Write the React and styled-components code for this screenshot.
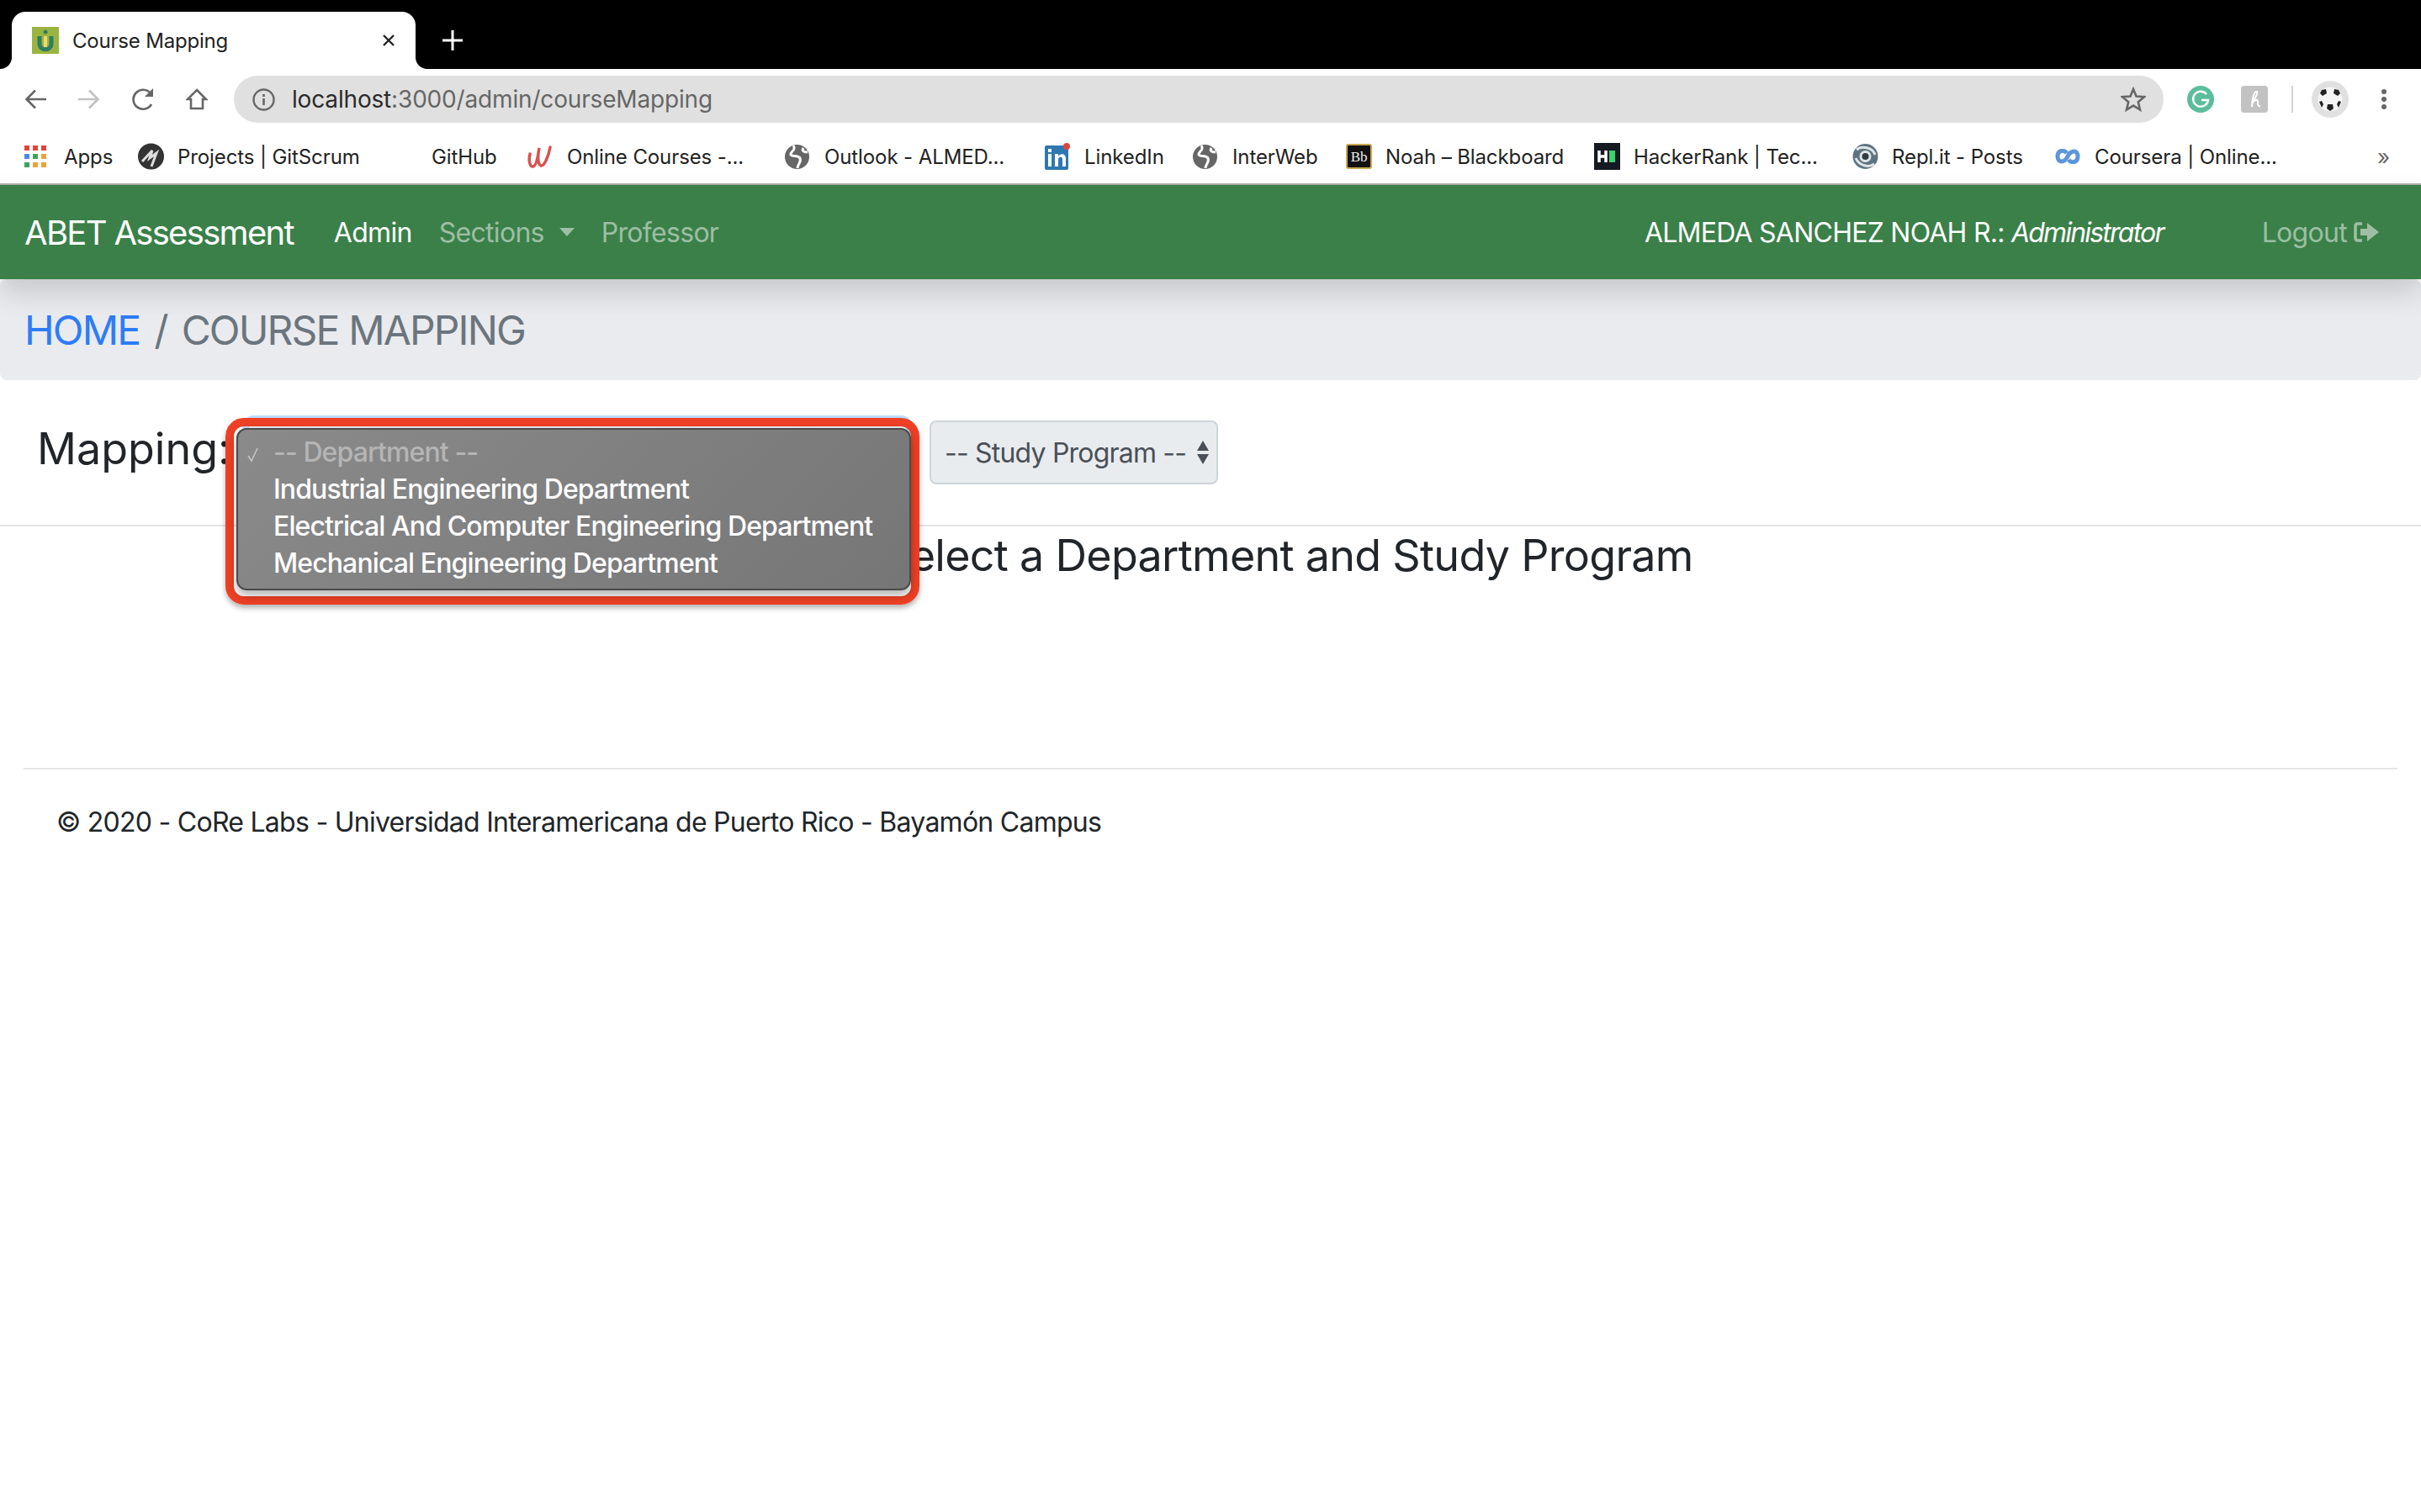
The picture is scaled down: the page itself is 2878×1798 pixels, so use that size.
import styled, { createGlobalStyle } from "styled-components";

const GlobalStyle = createGlobalStyle`
  html, body {
    margin: 0;
    background: #fff;
    font-family: Inter, "Liberation Sans", sans-serif;
    color: #212529;
  }
  * { box-sizing: border-box; }
`;

const Page = styled.div`
  width: 2878px;
  height: 1798px;
  overflow: hidden;
`;

const TabStrip = styled.div`
  height: 82px;
  background: #000;
  display: flex;
  align-items: flex-end;
  padding-left: 14px;
`;

const Tab = styled.div`
  position: relative;
  width: 480px;
  height: 68px;
  background: #fff;
  border-radius: 16px 16px 0 0;
  display: flex;
  align-items: center;
  padding: 0 24px 0 24px;
  font-size: 24px;
  letter-spacing: -0.2px;
  color: #222;

  &::before,
  &::after {
    content: "";
    position: absolute;
    bottom: 0;
    width: 14px;
    height: 14px;
  }
  &::before {
    left: -14px;
    background: radial-gradient(circle at 0 0, #000 13.5px, #fff 14.5px);
  }
  &::after {
    right: -14px;
    background: radial-gradient(circle at 100% 0, #000 13.5px, #fff 14.5px);
  }
`;

const TabTitle = styled.span`
  margin-left: 16px;
  flex: 1;
`;

const NewTab = styled.svg`
  width: 24px;
  height: 24px;
  margin: 0 0 22px 32px;
  align-self: flex-end;
`;

const Toolbar = styled.div`
  height: 72px;
  display: flex;
  align-items: center;
  padding: 0 0 0 29px;
`;

const ToolIcon = styled.svg`
  flex: none;
  width: ${(p) => p.$w}px;
  height: ${(p) => p.$h}px;
  margin-left: ${(p) => p.$ml || 0}px;
`;

const UrlBar = styled.div`
  width: 2294px;
  height: 56px;
  margin-left: 31px;
  background: #e0e0e0;
  border-radius: 28px;
  display: flex;
  align-items: center;
  padding: 0 21px 0 22px;
  font-size: 28px;
  letter-spacing: -0.17px;
  color: #666;
`;

const UrlText = styled.div`
  flex: 1;
  margin-left: 20px;
  b {
    font-weight: 400;
    color: #2b2b2b;
  }
`;

const ToolDivider = styled.div`
  width: 2px;
  height: 32px;
  margin-left: 28px;
  background: #d4d4d4;
`;

const Avatar = styled.div`
  width: 44px;
  height: 44px;
  margin-left: 22px;
  border-radius: 50%;
  background: #e0e0e0;
  display: flex;
  align-items: center;
  justify-content: center;
`;

const BookmarkBar = styled.div`
  height: 66px;
  display: flex;
  align-items: center;
  padding-left: 29px;
  border-bottom: 2px solid #b0b0b0;
  font-size: 24px;
  letter-spacing: -0.1px;
  color: #222;
`;

const Bookmark = styled.div`
  flex: none;
  width: ${(p) => p.$w}px;
  display: flex;
  align-items: center;
  white-space: nowrap;
`;

const BookmarkIcon = styled.span`
  flex: none;
  width: 31px;
  height: 32px;
  margin-right: ${(p) => p.$mr ?? 16}px;
  display: flex;
  align-items: center;
  justify-content: flex-start;
`;

const MoreBookmarks = styled.span`
  margin-left: 121px;
  font-size: 26px;
  color: #666;
`;

const Navbar = styled.nav`
  position: relative;
  z-index: 2;
  height: 112px;
  background: #3a8048;
  box-shadow: 0 16px 32px rgba(0, 0, 0, 0.15);
  display: flex;
  align-items: center;
  padding: 0 48px 0 29px;
`;

const Brand = styled.span`
  font-size: 40px;
  letter-spacing: -1.7px;
  color: #fff;
  margin-right: 32px;
`;

const NavLink = styled.span`
  font-size: 32px;
  letter-spacing: -0.7px;
  padding: 0 16px;
  color: ${(p) => (p.$active ? "#fff" : "rgba(255,255,255,.5)")};
  display: flex;
  align-items: center;
`;

const Caret = styled.span`
  width: 0;
  height: 0;
  margin-left: 18px;
  border-top: 10px solid currentColor;
  border-left: 9px solid transparent;
  border-right: 9px solid transparent;
`;

const UserName = styled.span`
  margin-left: auto;
  font-size: 32px;
  letter-spacing: -0.75px;
  color: #fff;
  em {
    font-style: italic;
    letter-spacing: -1.8px;
  }
`;

const Logout = styled(NavLink)`
  margin-left: 117px;
  padding: 0;
  svg {
    margin-left: 8px;
  }
`;

const Breadcrumb = styled.div`
  height: 120px;
  background: #e9ebef;
  border-radius: 8px;
  display: flex;
  align-items: center;
  padding-left: 29px;
  font-size: 48px;
  letter-spacing: -1.85px;
  color: #6c757d;
`;

const Crumb = styled.span`
  color: #2e7cf6;
`;

const CrumbSep = styled.span`
  margin: 0 17px;
`;

const MappingRow = styled.div`
  height: 174px;
  display: flex;
  align-items: flex-start;
  padding: 48px 0 0 44px;
  border-bottom: 2px solid #e4e4e4;
`;

const MappingLabel = styled.div`
  width: 250px;
  margin-top: -4px;
  font-size: 52px;
  line-height: 76px;
`;

const Select = styled.div`
  height: 76px;
  flex: none;
  background: #e9ecef;
  border: 2px solid #ced4da;
  border-radius: 8px;
  font-size: 32px;
  letter-spacing: -0.8px;
  white-space: nowrap;
  color: #495057;
  display: flex;
  align-items: center;
`;

const DepartmentSelect = styled(Select)`
  position: relative;
  z-index: 3;
  width: 785px;
  margin-right: 26px;
  box-shadow: 0 0 0 6px rgba(0, 123, 255, 0.25);
`;

const StudySelect = styled(Select)`
  width: 343px;
  padding: 0 8px 0 16px;
  justify-content: space-between;
`;

const NativeMenu = styled.div`
  position: absolute;
  top: 7px;
  left: -15px;
  width: 802px;
  height: 193px;
  padding: 5px 0;
  background: linear-gradient(135deg, #8a8a8b, #767677);
  border: 2px solid #4a4a4a;
  border-radius: 12px;
  box-shadow: 0 6px 12px rgba(0, 0, 0, 0.3);
`;

const MenuOption = styled.div`
  height: 44px;
  position: relative;
  padding-left: 42px;
  line-height: 44px;
  font-size: 32px;
  font-weight: 500;
  letter-spacing: -0.9px;
  color: ${(p) => (p.$muted ? "#b5b5b5" : "#fff")};
`;

const CheckMark = styled.svg`
  position: absolute;
  left: 10px;
  top: 16px;
  width: 18px;
  height: 18px;
`;

const RedFrame = styled.div`
  position: absolute;
  top: -5px;
  left: -28px;
  width: 825px;
  height: 222px;
  border: 10px solid #ed4025;
  border-radius: 22px;
  box-shadow: 0 4px 6px rgba(0, 0, 0, 0.3);
`;

const Prompt = styled.h3`
  margin: 1px 0 0 1049px;
  font-size: 52px;
  line-height: 68px;
  letter-spacing: -0.7px;
  font-weight: 400;
`;

const FooterWrap = styled.footer`
  margin: 218px 28px 0;
  padding: 39px 0 0 39px;
  border-top: 2px solid #e4e4e4;
  font-size: 32px;
  line-height: 48px;
  letter-spacing: -0.73px;
`;

const Globe = () => (
  <svg width="29" height="29" viewBox="0 0 29 29">
    <circle cx="14.5" cy="14.5" r="14.5" fill="#666" />
    <path
      d="M10 1 C14 7 6 8 7 12 C9 15 15 12 18 16 C20 21 15 23 15 28 M22 4 C20 7 22 9 27 9"
      fill="none"
      stroke="#fff"
      strokeWidth="3"
    />
  </svg>
);

const bookmarks = [
  {
    label: "Apps",
    w: 135,
    icon: (
      <svg width="26" height="26" viewBox="0 0 26 26">
        {["#e2443c", "#e2443c", "#e2443c", "#4a8be8", "#3fa35c", "#e8a33a", "#3fa35c", "#e8a33a", "#e8a33a"].map((c, i) => (
          <rect key={i} x={(i % 3) * 10} y={Math.floor(i / 3) * 10} width="6" height="6" fill={c} />
        ))}
      </svg>
    ),
  },
  {
    label: "Projects | GitScrum",
    w: 314,
    icon: (
      <svg width="31" height="32" viewBox="0 0 31 32">
        <circle cx="15.5" cy="16" r="15.5" fill="#333" />
        <path d="M5 22 L17 9 L14 18 L22 12 L16 28" fill="none" stroke="#ddd" strokeWidth="3" />
      </svg>
    ),
  },
  { label: "GitHub", w: 149, mr: 4, icon: null },
  {
    label: "Online Courses -...",
    w: 306,
    icon: (
      <svg width="29" height="30" viewBox="0 0 29 30">
        <path d="M3 12 C1 20 3 28 7 27 C11 26 13 12 14 5 C12 14 12 24 16 26 C20 27 25 15 27 4" fill="none" stroke="#d9534f" strokeWidth="3.5" strokeLinecap="round" />
      </svg>
    ),
  },
  { label: "Outlook - ALMED...", w: 309, icon: <Globe /> },
  {
    label: "LinkedIn",
    w: 176,
    icon: (
      <svg width="31" height="32" viewBox="0 0 31 32">
        <rect x="0" y="3" width="28" height="29" rx="2" fill="#2f77b1" />
        <rect x="4" y="13" width="4" height="15" fill="#fff" />
        <rect x="4" y="7" width="4" height="4" fill="#fff" />
        <path d="M12 28 V13 H16 V16 C18 12 25 12 25 18 V28 H21 V19 C21 16 16 16 16 20 V28 Z" fill="#fff" />
        <circle cx="26" cy="4" r="4" fill="#e0453a" />
      </svg>
    ),
  },
  { label: "InterWeb", w: 182, icon: <Globe /> },
  {
    label: "Noah – Blackboard",
    w: 295,
    icon: (
      <svg width="31" height="30" viewBox="0 0 31 30">
        <rect x="1" y="1" width="29" height="28" rx="2" fill="#111" stroke="#c9a84f" strokeWidth="2" />
        <text x="15.5" y="21" textAnchor="middle" fontFamily="Liberation Serif" fontSize="17" fill="#eee">Bb</text>
      </svg>
    ),
  },
  {
    label: "HackerRank | Tec...",
    w: 307,
    icon: (
      <svg width="31" height="32" viewBox="0 0 31 32">
        <rect width="31" height="32" fill="#151a22" />
        <path d="M6 9 V23 M14 9 V23 M6 16 H14" stroke="#fff" strokeWidth="3.5" fill="none" />
        <rect x="18" y="9" width="7" height="14" fill="#39d26b" />
      </svg>
    ),
  },
  {
    label: "Repl.it - Posts",
    w: 241,
    icon: (
      <svg width="31" height="32" viewBox="0 0 31 32">
        <circle cx="15.5" cy="16" r="15" fill="#5f7480" />
        <path d="M5 8 C11 3 24 5 27 14 M26 25 C20 30 8 27 4 18" fill="none" stroke="#dfe5e8" strokeWidth="3" />
        <circle cx="15.5" cy="16" r="7" fill="#dfe5e8" />
        <circle cx="15.5" cy="16" r="4" fill="#2e3c44" />
      </svg>
    ),
  },
  {
    label: "Coursera | Online...",
    w: 262,
    icon: (
      <svg width="30" height="18" viewBox="0 0 30 18">
        <path d="M14 5 C11 1 3 1 3 9 C3 17 11 17 15 9 C19 1 27 1 27 9 C27 17 19 17 16 13" fill="none" stroke="#5b95db" strokeWidth="5" />
      </svg>
    ),
  },
];

const options = [
  "Industrial Engineering Department",
  "Electrical And Computer Engineering Department",
  "Mechanical Engineering Department",
];

export default function App() {
  return (
    <Page>
      <GlobalStyle />
      <TabStrip>
        <Tab>
          <svg width="32" height="32" viewBox="0 0 32 32">
            <rect width="32" height="32" fill="#9ab53f" />
            <path d="M9 11 V20 C9 29 23 29 23 20 V11" fill="none" stroke="#2f7d62" strokeWidth="5" />
            <rect x="14" y="11" width="4" height="13" fill="#f2d76a" />
            <circle cx="16" cy="6" r="2.5" fill="#2f7d62" />
          </svg>
          <TabTitle>Course Mapping</TabTitle>
          <svg width="16" height="16" viewBox="0 0 16 16">
            <path d="M2 2 L14 14 M14 2 L2 14" stroke="#222" strokeWidth="2.4" />
          </svg>
        </Tab>
        <NewTab viewBox="0 0 24 24">
          <path d="M12 0 V24 M0 12 H24" stroke="#fff" strokeWidth="3" />
        </NewTab>
      </TabStrip>

      <Toolbar>
        <ToolIcon $w={26} $h={24} viewBox="0 0 26 24">
          <path d="M26 12 H3 M13 1.5 L2.5 12 L13 22.5" fill="none" stroke="#666" strokeWidth="2.6" />
        </ToolIcon>
        <ToolIcon $w={26} $h={24} $ml={38} viewBox="0 0 26 24">
          <path d="M0 12 H23 M13 1.5 L23.5 12 L13 22.5" fill="none" stroke="#c2c2c2" strokeWidth="2.6" />
        </ToolIcon>
        <ToolIcon $w={28} $h={26} $ml={38} viewBox="0 0 28 26">
          <path d="M23 19 A11.5 11.5 0 1 1 22 6" fill="none" stroke="#666" strokeWidth="2.6" />
          <path d="M25 0 V10 H15 Z" fill="#666" />
        </ToolIcon>
        <ToolIcon $w={26} $h={26} $ml={36} viewBox="0 0 26 26">
          <path d="M13 2 L24 13 H20 V24 H6 V13 H2 Z" fill="none" stroke="#666" strokeWidth="2.6" />
        </ToolIcon>
        <UrlBar>
          <svg width="27" height="27" viewBox="0 0 27 27">
            <circle cx="13.5" cy="13.5" r="12" fill="none" stroke="#666" strokeWidth="2.4" />
            <path d="M13.5 12 V20 M13.5 7 V10" stroke="#666" strokeWidth="2.6" />
          </svg>
          <UrlText>
            <b>localhost</b>:3000/admin/courseMapping
          </UrlText>
          <svg width="30" height="30" viewBox="0 0 30 30">
            <path d="M15 3 L18.5 11.5 L28 12.2 L20.8 18.3 L23 27.5 L15 22.6 L7 27.5 L9.2 18.3 L2 12.2 L11.5 11.5 Z" fill="none" stroke="#666" strokeWidth="2.6" />
          </svg>
        </UrlBar>
        <ToolIcon $w={32} $h={32} $ml={28} viewBox="0 0 32 32">
          <circle cx="16" cy="16" r="16" fill="#5bbd9b" />
          <path d="M23 10 A9 9 0 1 0 25 17 H17" fill="none" stroke="#fff" strokeWidth="2.4" />
        </ToolIcon>
        <ToolIcon $w={32} $h={32} $ml={32} viewBox="0 0 32 32">
          <rect width="32" height="32" rx="4" fill="#c2c2c2" />
          <path d="M13 25 C13 15 16 6 19 7 C21 9 15 17 13 22 C15 17 20 15 20 19 C20 22 20 25 23 24" fill="none" stroke="#fff" strokeWidth="2" />
        </ToolIcon>
        <ToolDivider />
        <Avatar>
          <svg width="30" height="30" viewBox="0 0 30 30">
            <circle cx="15" cy="15" r="14.5" fill="#f4f4f4" />
            <path d="M15 10 L20 14 L18 20 H12 L10 14 Z" fill="#f4f4f4" />
            <path d="M5 4 L10 3 L11 8 L6 11 L3 8 Z M25 4 L20 3 L19 8 L24 11 L27 8 Z M11 26 L12 21 H18 L19 26 L15 29 Z M2 18 L5 17 L7 21 L5 25 Z M28 18 L25 17 L23 21 L25 25 Z" fill="#222" />
          </svg>
        </Avatar>
        <ToolIcon $w={8} $h={26} $ml={38} viewBox="0 0 8 26">
          <circle cx="4" cy="4" r="3" fill="#666" />
          <circle cx="4" cy="13" r="3" fill="#666" />
          <circle cx="4" cy="22" r="3" fill="#666" />
        </ToolIcon>
      </Toolbar>

      <BookmarkBar>
        {bookmarks.map((b) => (
          <Bookmark key={b.label} $w={b.w}>
            <BookmarkIcon $mr={b.mr}>{b.icon}</BookmarkIcon>
            {b.label}
          </Bookmark>
        ))}
        <MoreBookmarks>»</MoreBookmarks>
      </BookmarkBar>

      <Navbar>
        <Brand>ABET Assessment</Brand>
        <NavLink $active>Admin</NavLink>
        <NavLink>
          Sections
          <Caret />
        </NavLink>
        <NavLink>Professor</NavLink>
        <UserName>
          ALMEDA SANCHEZ NOAH R.: <em>Administrator</em>
        </UserName>
        <Logout>
          Logout
          <svg width="32" height="26" viewBox="0 0 32 26">
            <path d="M10 3 H5 Q2 3 2 6 V20 Q2 23 5 23 H10" fill="none" stroke="currentColor" strokeWidth="3.5" />
            <path d="M8 9 H16 V2 L30 13 L16 24 V17 H8 Z" fill="currentColor" />
          </svg>
        </Logout>
      </Navbar>

      <Breadcrumb>
        <Crumb>HOME</Crumb>
        <CrumbSep>/</CrumbSep>
        COURSE MAPPING
      </Breadcrumb>

      <MappingRow>
        <MappingLabel>Mapping:</MappingLabel>
        <DepartmentSelect>
          <RedFrame />
          <NativeMenu>
            <MenuOption $muted>
              <CheckMark viewBox="0 0 18 18">
                <path d="M2 10 L6 16 L13 1" fill="none" stroke="#c4c4c4" strokeWidth="1.6" />
              </CheckMark>
              -- Department --
            </MenuOption>
            {options.map((o) => (
              <MenuOption key={o}>{o}</MenuOption>
            ))}
          </NativeMenu>
        </DepartmentSelect>
        <StudySelect>
          -- Study Program --
          <svg width="16" height="28" viewBox="0 0 16 28">
            <path d="M8 0 L15 12 H1 Z M1 16 H15 L8 28 Z" fill="#495057" />
          </svg>
        </StudySelect>
      </MappingRow>

      <Prompt>Select a Department and Study Program</Prompt>

      <FooterWrap>© 2020 - CoRe Labs - Universidad Interamericana de Puerto Rico - Bayamón Campus</FooterWrap>
    </Page>
  );
}
